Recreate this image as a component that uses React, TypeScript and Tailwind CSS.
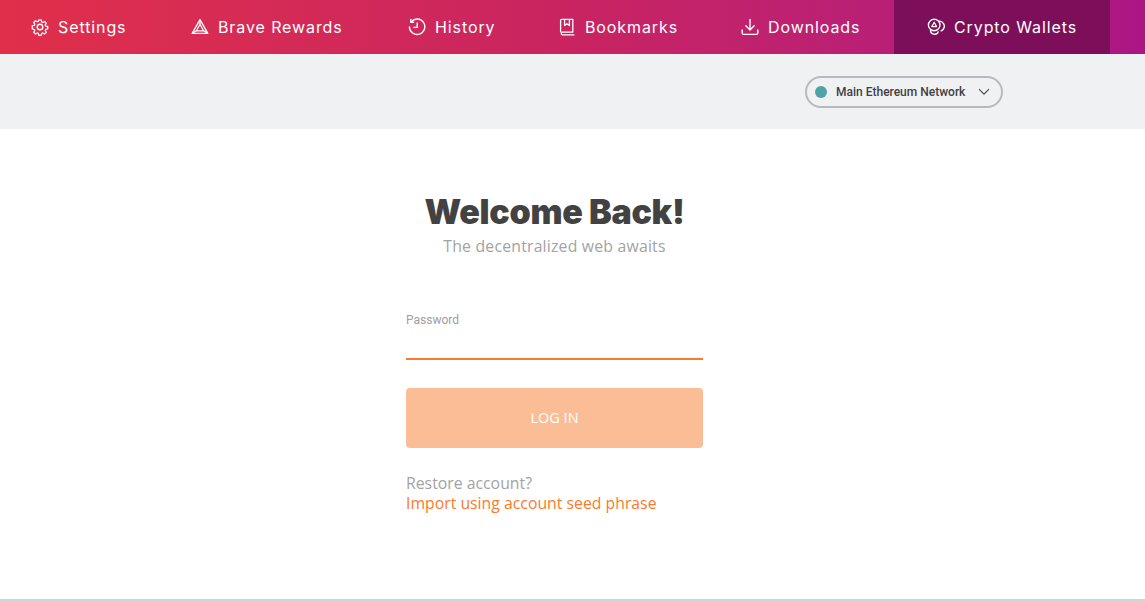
const GearIcon = () => (
  <svg width="18" height="18" viewBox="0 0 18 18" fill="none" stroke="currentColor" strokeWidth="1.4" strokeLinejoin="round">
    <circle cx="9" cy="9" r="2.8" />
    <path d="M7.6 1.2h2.8l.4 2.2 1.3.6 1.9-1.2 2 2-1.2 1.9.6 1.3 2.2.4v2.8l-2.2.4-.6 1.3 1.2 1.9-2 2-1.9-1.2-1.3.6-.4 2.2H7.6l-.4-2.2-1.3-.6-1.9 1.2-2-2 1.2-1.9-.6-1.3-2.2-.4V7.6l2.2-.4.6-1.3-1.2-1.9 2-2 1.9 1.2 1.3-.6z" transform="translate(.9 .9) scale(.9)" />
  </svg>
)

const RewardsIcon = () => (
  <svg width="18" height="18" viewBox="0 0 18 18" fill="none" stroke="currentColor" strokeWidth="1.3" strokeLinejoin="round">
    <path d="M9 1.6 16.8 15.4H1.2z" />
    <path d="M9 6.2 12.6 12.8H5.4z" />
    <path d="M1.2 15.4 5.4 12.8M16.8 15.4 12.6 12.8M9 1.6V6.2" />
  </svg>
)

const HistoryIcon = () => (
  <svg width="18" height="18" viewBox="0 0 18 18" fill="none" stroke="currentColor" strokeWidth="1.4" strokeLinecap="round" strokeLinejoin="round">
    <path d="M3.2 3.8A7.7 7.7 0 1 1 1.4 9" />
    <path d="M2.8 1.4v2.8h2.8" />
    <path d="M9.2 5v4.4H5.8" />
  </svg>
)

const BookmarksIcon = () => (
  <svg width="18" height="18" viewBox="0 0 18 18" fill="none" stroke="currentColor" strokeWidth="1.3" strokeLinejoin="round">
    <path d="M2.6 14.2V2.6a1.2 1.2 0 0 1 1.2-1.2h11v12.8H4a1.5 1.5 0 0 0 0 2.6h12.4" />
    <path d="M6.6 1.4v6.2L9 5.8l2.4 1.8V1.4" />
  </svg>
)

const DownloadsIcon = () => (
  <svg width="18" height="18" viewBox="0 0 18 18" fill="none" stroke="currentColor" strokeWidth="1.4" strokeLinecap="round" strokeLinejoin="round">
    <path d="M9 1.4v10.4M4.8 7.8 9 12l4.2-4.2" />
    <path d="M1.2 12v3a1.4 1.4 0 0 0 1.4 1.4h12.8a1.4 1.4 0 0 0 1.4-1.4v-3" />
  </svg>
)

const WalletsIcon = () => (
  <svg width="18" height="18" viewBox="0 0 18 18" fill="none" stroke="currentColor" strokeWidth="1.4" strokeLinejoin="round">
    <circle cx="7.2" cy="7" r="5.8" />
    <path d="M11.4 3.2a5 5 0 0 1 4.8 8 5 5 0 0 1-2.6 1.8" />
    <path d="M3.6 11.8a4 4 0 0 0 7.8 1.6" />
    <path d="M7.2 4.2 9.6 8.6H4.8z" strokeWidth="1.2" />
  </svg>
)

const items = [
  { label: 'Settings', icon: <GearIcon />, width: 'w-[160px]', inset: 'pl-[31px]' },
  { label: 'Brave Rewards', icon: <RewardsIcon />, width: 'w-[217px]', inset: 'pl-[31px]' },
  { label: 'History', icon: <HistoryIcon />, width: 'w-[150px]', inset: 'pl-[31px]' },
  { label: 'Bookmarks', icon: <BookmarksIcon />, width: 'w-[175px]', inset: 'pl-[31px]' },
  { label: 'Downloads', icon: <DownloadsIcon />, width: 'w-[192px]', inset: 'pl-[39px]' },
]

export default function App() {
  return (
    <div className="flex h-[602px] w-[1145px] flex-col overflow-hidden bg-white font-['Open_Sans',sans-serif]">
      <nav className="flex h-[54px] shrink-0 bg-gradient-to-r from-[#e02f4a] via-[#c92461] to-[#ab1685] text-white">
        {items.map((item) => (
          <div key={item.label} className={`flex h-full items-center gap-[9px] ${item.width} ${item.inset}`}>
            {item.icon}
            <span className="text-[16px] tracking-[0.9px] font-['Inter',sans-serif]">{item.label}</span>
          </div>
        ))}
        <div className="flex h-full w-[216px] items-center gap-[9px] bg-[#7d0f5a] pl-[33px]">
          <WalletsIcon />
          <span className="text-[16px] tracking-[0.9px] font-['Inter',sans-serif]">Crypto Wallets</span>
        </div>
      </nav>

      <div className="flex h-[75px] shrink-0 items-center justify-end bg-[#f0f1f3] pr-[142px]">
        <div className="flex h-[32px] w-[198px] items-center rounded-full border-2 border-[#b5bac0] pl-[8px] pr-[11px]">
          <span className="h-[12px] w-[12px] rounded-full bg-[#4fa3a5]" />
          <span className="ml-[9px] flex-1 text-[12px] font-medium text-[#3f4144] font-['Roboto',sans-serif]">Main Ethereum Network</span>
          <svg width="12" height="8" viewBox="0 0 12 8" fill="none" stroke="#45484c" strokeWidth="1.1">
            <path d="m1 1.2 5 5 5-5" />
          </svg>
        </div>
      </div>

      <main className="flex flex-1 flex-col items-center pr-[36px]">
        <h1 className="mt-[60px] text-[34px] leading-[46px] font-black tracking-[-0.3px] text-[#424242] font-['Inter',sans-serif]">Welcome Back!</h1>
        <p className="text-[15.8px] leading-[22px] tracking-[0.2px] text-[#a3a3a3]">The decentralized web awaits</p>

        <div className="mt-[55px] w-[297px]">
          <label className="block text-[12px] leading-[16px] text-[#9e9e9e] font-['Roboto',sans-serif]">Password</label>
          <div className="mt-[12px] h-[20px] border-b-2 border-[#fb7a2c]" />
          <button className="mt-[28px] h-[60px] w-full rounded-[4px] bg-[#fbbd96] text-[14.5px] text-white">LOG IN</button>
          <p className="mt-[25px] text-[15.8px] leading-[20px] text-[#a3a3a3]">Restore account?</p>
          <a className="block text-[15.8px] leading-[20px] text-[#fb7a2c]">Import using account seed phrase</a>
        </div>
      </main>

      <div className="h-[3px] shrink-0 bg-[#d1d5d6]" />
    </div>
  )
}
